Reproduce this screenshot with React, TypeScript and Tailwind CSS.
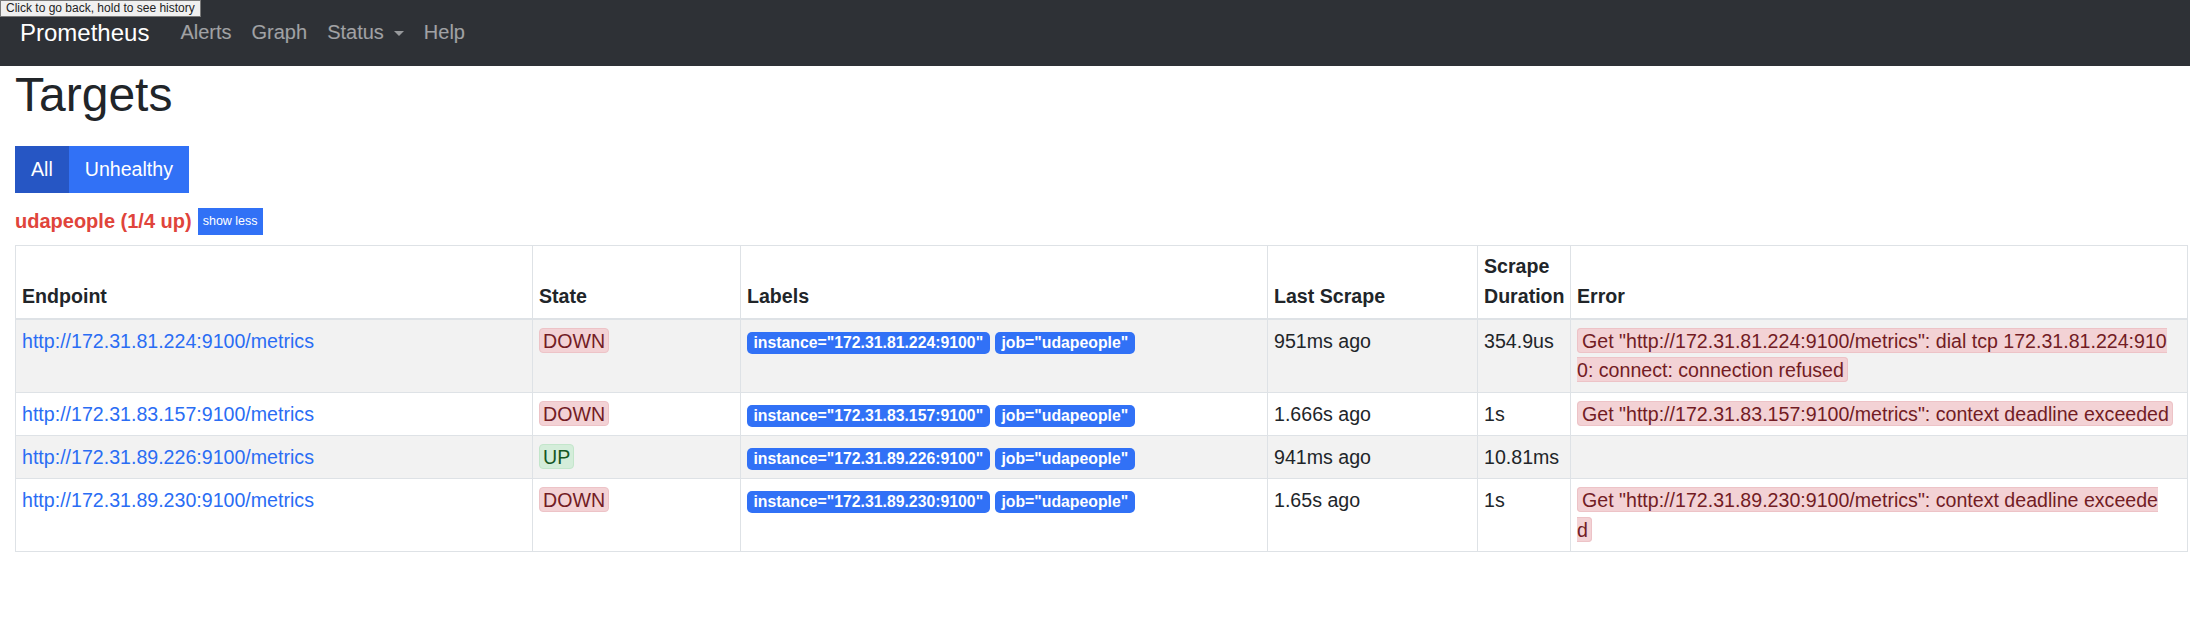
import React from "react";

type Target = {
  endpoint: string;
  state: "UP" | "DOWN";
  instance: string;
  lastScrape: string;
  duration: string;
  error: string[];
};

const targets: Target[] = [
  {
    endpoint: "http://172.31.81.224:9100/metrics",
    state: "DOWN",
    instance: "172.31.81.224:9100",
    lastScrape: "951ms ago",
    duration: "354.9us",
    error: [
      'Get "http://172.31.81.224:9100/metrics": dial tcp 172.31.81.224:910',
      "0: connect: connection refused",
    ],
  },
  {
    endpoint: "http://172.31.83.157:9100/metrics",
    state: "DOWN",
    instance: "172.31.83.157:9100",
    lastScrape: "1.666s ago",
    duration: "1s",
    error: ['Get "http://172.31.83.157:9100/metrics": context deadline exceeded'],
  },
  {
    endpoint: "http://172.31.89.226:9100/metrics",
    state: "UP",
    instance: "172.31.89.226:9100",
    lastScrape: "941ms ago",
    duration: "10.81ms",
    error: [],
  },
  {
    endpoint: "http://172.31.89.230:9100/metrics",
    state: "DOWN",
    instance: "172.31.89.230:9100",
    lastScrape: "1.65s ago",
    duration: "1s",
    error: ['Get "http://172.31.89.230:9100/metrics": context deadline exceede', "d"],
  },
];

const headers = ["Endpoint", "State", "Labels", "Last Scrape", "Scrape Duration", "Error"];
const colWidths = [517, 208, 527, 210, 93, 617];

function StateBadge({ state }: { state: Target["state"] }) {
  if (state === "UP") {
    return (
      <span className="inline-block h-[25px] rounded-[4px] border border-[#c3e6cb] bg-[#d4edda] px-[3px] pt-[2px] leading-[21px] text-[#155724]">
        UP
      </span>
    );
  }
  return (
    <span className="inline-block h-[25px] rounded-[4px] border border-[#edc3c7] bg-[#f3d2d5] px-[3px] pt-[2px] leading-[21px] text-[#721c24]">
      DOWN
    </span>
  );
}

function LabelBadge({ children }: { children: React.ReactNode }) {
  return (
    <span className="inline-block rounded-[5px] bg-[#3171f6] px-[6.4px] text-[15.8px] font-bold leading-[22px] text-white">
      {children}
    </span>
  );
}

export default function App() {
  return (
    <div className="relative min-h-[630px] bg-white font-['Liberation_Sans',Arial,sans-serif] text-[19.6px] leading-[29.4px] text-[#212529]">
      {/* Browser tooltip over the page */}
      <div className="absolute left-0 top-0 z-10 h-[17px] border border-[#7a7a7a] bg-[#f0f0f0] px-[5px] text-[12px] leading-[15px] text-[#222]">
        Click to go back, hold to see history
      </div>

      {/* Navbar */}
      <nav className="flex h-[66px] items-center bg-[#2e3136] px-[20px] pb-[1px]">
        <span className="mr-[21px] text-[24px] text-white">Prometheus</span>
        <span className="px-[10px] text-[20px] text-white/55">Alerts</span>
        <span className="px-[10px] text-[20px] text-white/55">Graph</span>
        <span className="flex items-center px-[10px] text-[20px] text-white/55">
          Status
          <span className="ml-[10px] mt-[1px] h-0 w-0 border-x-[5px] border-t-[5px] border-x-transparent border-t-[#97999c]" />
        </span>
        <span className="px-[10px] text-[20px] text-white/55">Help</span>
      </nav>

      <div className="pl-[15px] pr-[3px]">
        <h1 className="mb-[22.4px] text-[48px] font-medium leading-[57.6px]">Targets</h1>

        {/* Filter buttons */}
        <div className="flex">
          <button className="bg-[#2656c4] px-[16px] py-[9px] leading-[29px] text-white">All</button>
          <button className="bg-[#3171f6] px-[16px] py-[9px] leading-[29px] text-white">Unhealthy</button>
        </div>

        {/* Pool header */}
        <div className="mt-[15px] flex h-[27px] items-center gap-[6px]">
          <span className="text-[20px] font-bold leading-[27px] text-[#e0443b]">udapeople (1/4 up)</span>
          <button className="h-[27px] bg-[#3171f6] px-[5px] text-[12.5px] leading-[27px] text-white">
            show less
          </button>
        </div>

        {/* Targets table */}
        <table className="mt-[10px] w-[2172px] table-fixed border-collapse border border-[#dee2e6]">
          <colgroup>
            {colWidths.map((w, i) => (
              <col key={i} style={{ width: w }} />
            ))}
          </colgroup>
          <thead>
            <tr>
              {headers.map((h) => (
                <th
                  key={h}
                  className="border border-b-2 border-[#dee2e6] px-[6px] py-[6.5px] text-left align-bottom font-bold"
                >
                  {h}
                </th>
              ))}
            </tr>
          </thead>
          <tbody>
            {targets.map((t, i) => (
              <tr key={t.endpoint} className={i % 2 === 0 ? "bg-[#f2f2f2]" : "bg-white"}>
                <td className="border border-[#dee2e6] px-[6px] pb-[6px] pt-[7px] align-top">
                  <a className="text-[#2a6df4]">{t.endpoint}</a>
                </td>
                <td className="border border-[#dee2e6] px-[6px] pb-[6px] pt-[7px] align-top">
                  <StateBadge state={t.state} />
                </td>
                <td className="border border-[#dee2e6] px-[6px] pb-[6px] pt-[7px] align-top">
                  <LabelBadge>instance="{t.instance}"</LabelBadge>{" "}
                  <LabelBadge>job="udapeople"</LabelBadge>
                </td>
                <td className="border border-[#dee2e6] px-[6px] pb-[6px] pt-[7px] align-top">{t.lastScrape}</td>
                <td className="border border-[#dee2e6] px-[6px] pb-[6px] pt-[7px] align-top">{t.duration}</td>
                <td className="border border-[#dee2e6] px-[6px] pb-[6px] pt-[7px] align-top">
                  {t.error.length > 0 && (
                    <span className="rounded-[4px] border border-[#edc3c7] bg-[#f3d2d5] pl-[4px] pr-[3px] pt-[1px] text-[#721c24]">
                      {t.error[0]}
                      {t.error[1] && (
                        <>
                          <br />
                          {t.error[1]}
                        </>
                      )}
                    </span>
                  )}
                </td>
              </tr>
            ))}
          </tbody>
        </table>
      </div>
    </div>
  );
}
